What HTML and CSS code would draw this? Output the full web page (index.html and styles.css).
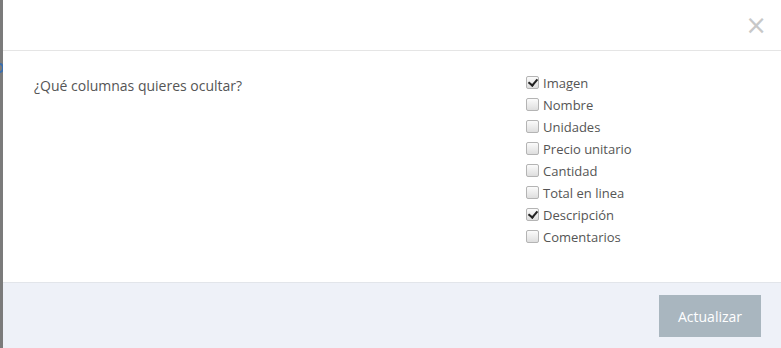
FILE: index.html
```html
<!DOCTYPE html>
<html lang="es">
<head>
  <meta charset="UTF-8">
  <title>Ocultar columnas</title>
  <link rel="stylesheet" href="styles.css">
</head>
<body>
  <div class="backdrop">
    <span class="peek"></span>
  </div>

  <div class="modal">
    <div class="modal-header">
      <button type="button" class="close" aria-label="Cerrar">&times;</button>
    </div>

    <div class="modal-body">
      <p class="question">¿Qué columnas quieres ocultar?</p>
      <form class="columnas">
        <label><input type="checkbox" checked> Imagen</label>
        <label><input type="checkbox"> Nombre</label>
        <label><input type="checkbox"> Unidades</label>
        <label><input type="checkbox"> Precio unitario</label>
        <label><input type="checkbox"> Cantidad</label>
        <label><input type="checkbox"> Total en linea</label>
        <label><input type="checkbox" checked> Descripción</label>
        <label><input type="checkbox"> Comentarios</label>
      </form>
    </div>

    <div class="modal-footer">
      <button type="button" class="btn">Actualizar</button>
    </div>
  </div>
</body>
</html>
```

FILE: styles.css
```css
* {
  box-sizing: border-box;
}

body {
  margin: 0;
  display: flex;
  height: 348px;
  overflow: hidden;
  font-family: "Open Sans", sans-serif;
  font-size: 13px;
  color: #555555;
  background: #ffffff;
}

.backdrop {
  width: 3px;
  flex: none;
  background: #7b7b7b;
  position: relative;
  overflow: hidden;
}

/* bit of the page behind the modal */
.peek {
  position: absolute;
  top: 63px;
  left: -4px;
  width: 8px;
  height: 10px;
  border: 2px solid #3a6fb0;
  border-radius: 50%;
}

.modal {
  flex: 1;
  display: flex;
  flex-direction: column;
  background: #ffffff;
}

.modal-header {
  height: 51px;
  border-bottom: 1px solid #e5e5e5;
  display: flex;
  justify-content: flex-end;
  align-items: center;
  padding: 0 14px 0 0;
}

.close {
  border: none;
  background: none;
  padding: 0;
  font-family: "DejaVu Sans", sans-serif;
  font-size: 26px;
  line-height: 1;
  color: #c8c8c8;
  cursor: pointer;
}

.modal-body {
  flex: 1;
  display: grid;
  grid-template-columns: 492px 1fr;
  padding: 20px 31px 0;
}

.question {
  margin: 5px 0 0;
  font-size: 14px;
  line-height: 20px;
}

.columnas {
  margin-top: 1px;
}

.columnas label {
  display: flex;
  align-items: center;
  height: 22px;
  font-size: 13px;
  color: #555555;
}

input[type="checkbox"] {
  appearance: none;
  -webkit-appearance: none;
  width: 13px;
  height: 13px;
  margin: 0 4px 2px 0;
  border: 1px solid #b4b4b4;
  border-radius: 2px;
  background: linear-gradient(#fbfbfb, #dedede);
  position: relative;
}

input[type="checkbox"]:checked::after {
  content: "";
  position: absolute;
  left: 3px;
  top: 0;
  width: 4px;
  height: 7px;
  border: solid #222222;
  border-width: 0 2px 2px 0;
  transform: rotate(40deg);
}

.modal-footer {
  height: 66px;
  border-top: 1px solid #e2e5ea;
  background: #eef1f8;
  display: flex;
  justify-content: flex-end;
  align-items: flex-start;
  padding: 12px 20px 0 0;
}

.btn {
  width: 102px;
  height: 42px;
  border: none;
  background: #a9b6bf;
  color: #ffffff;
  font-family: "Open Sans", sans-serif;
  font-size: 14px;
  cursor: pointer;
}
```
